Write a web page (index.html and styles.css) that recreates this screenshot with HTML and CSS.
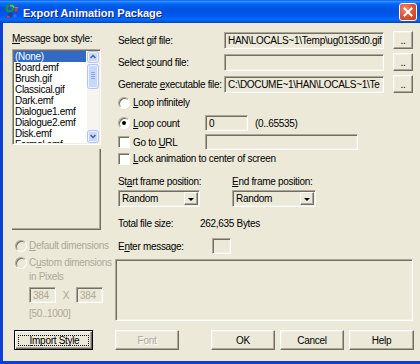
FILE: index.html
```html
<!DOCTYPE html>
<html lang="en">
<head>
    <meta charset="utf-8">
    <title>Export Animation Package</title>
    <link rel="stylesheet" href="styles.css">
</head>
<body>
<div class="window">
    <div class="titlebar">
        <svg class="app-icon" width="14" height="16" viewBox="0 0 14 16">
            <path d="M4 2 C1 3 1 7 3 8 C5 9 8 8 8 5 C8 3 6 2 5 3" fill="none" stroke="#1f8f3a" stroke-width="2.4"/>
            <path d="M5 3 C7 2 9 3 9 5" fill="none" stroke="#6fd35c" stroke-width="1.2"/>
            <circle cx="11" cy="7" r="1.6" fill="#e2322b"/>
            <rect x="10" y="4" width="3" height="1.4" fill="#f06a3a"/>
            <path d="M3 10 L7 9 L8 12 L6 15 L3 14 Z" fill="#1d3fa8"/>
            <path d="M8 12 L11 11 L12 14 L9 15 Z" fill="#3d68d8"/>
            <rect x="2" y="13" width="3" height="1.5" fill="#e2322b"/>
        </svg>
        <span class="title">Export Animation Package</span>
        <span class="close-btn">
            <svg width="10" height="10" viewBox="0 0 10 10">
                <path d="M1.5 1.5 L8.5 8.5 M8.5 1.5 L1.5 8.5" stroke="#fff" stroke-width="2" stroke-linecap="square"/>
            </svg>
        </span>
    </div>

    <div class="client">
        <div class="panes">
            <div class="left-pane">
                <div class="label"><u>M</u>essage box style:</div>
                <div class="listbox">
                    <ul class="items">
                        <li class="selected">(None)</li>
                        <li>Board.emf</li>
                        <li>Brush.gif</li>
                        <li>Classical.gif</li>
                        <li>Dark.emf</li>
                        <li>Dialogue1.emf</li>
                        <li>Dialogue2.emf</li>
                        <li>Disk.emf</li>
                        <li>Formal.emf</li>
                    </ul>
                    <svg class="vscroll" width="12" height="92" viewBox="0 0 12 92">
                        <rect x="0" y="0" width="12" height="92" fill="#f5f4ef"/>
                        <rect x="0.5" y="0.5" width="11" height="11" rx="2" fill="#c8d7fc" stroke="#b1c5f4"/>
                        <rect x="1.5" y="1.5" width="9" height="9" rx="1" fill="none" stroke="#eef3ff"/>
                        <path d="M3.5 7 L6 4.5 L8.5 7" fill="none" stroke="#4d6185" stroke-width="1.5"/>
                        <rect x="0.5" y="13.5" width="11" height="24" rx="2" fill="#c8d7fc" stroke="#b1c5f4"/>
                        <rect x="1.5" y="14.5" width="9" height="22" rx="1" fill="none" stroke="#eef3ff"/>
                        <path d="M4 21.5 H8 M4 23.5 H8 M4 25.5 H8 M4 27.5 H8" stroke="#8ba6e8"/>
                        <rect x="0.5" y="79.5" width="11" height="12" rx="2" fill="#c8d7fc" stroke="#b1c5f4"/>
                        <rect x="1.5" y="80.5" width="9" height="10" rx="1" fill="none" stroke="#eef3ff"/>
                        <path d="M3.5 84 L6 86.5 L8.5 84" fill="none" stroke="#4d6185" stroke-width="1.5"/>
                    </svg>
                </div>
                <div class="preview"></div>

                <div class="opt dim"><span class="radio"></span><span><u>D</u>efault dimensions</span></div>
                <div class="opt dim second"><span class="radio"></span><span>C<u>u</u>stom dimensions</span></div>
                <div class="sub dim">in Pixels</div>
                <div class="dims">
                    <span class="field small">384</span>
                    <span class="times dim">X</span>
                    <span class="field small">384</span>
                </div>
                <div class="sub dim range">[50..1000]</div>
            </div>

            <div class="right-pane">
                <div class="file-row">
                    <span class="file-label">Select <u>g</u>if file:</span>
                    <span class="field path">HAN\LOCALS~1\Temp\ug0135d0.gif</span>
                    <span class="btn browse">..</span>
                </div>
                <div class="file-row">
                    <span class="file-label">Select <u>s</u>ound file:</span>
                    <span class="field path"></span>
                    <span class="btn browse">..</span>
                </div>
                <div class="file-row">
                    <span class="file-label">Generate <u>e</u>xecutable file:</span>
                    <span class="field path">C:\DOCUME~1\HAN\LOCALS~1\Te</span>
                    <span class="btn browse">..</span>
                </div>

                <div class="opt loop-inf"><span class="radio"></span><span><u>L</u>oop infinitely</span></div>
                <div class="loop-count">
                    <span class="opt fixed"><span class="radio checked"></span><span><u>L</u>oop count</span></span>
                    <span class="field count">0</span>
                    <span class="hint">(0..65535)</span>
                </div>
                <div class="url-row">
                    <span class="opt fixed"><span class="check"></span><span>Go to <u>U</u>RL</span></span>
                    <span class="field url"></span>
                </div>
                <div class="opt lock"><span class="check"></span><span><u>L</u>ock animation to center of screen</span></div>

                <div class="frames">
                    <div class="frame-col start">
                        <div class="label">St<u>a</u>rt frame position:</div>
                        <div class="combo start-combo"><span class="combo-text">Random</span><span class="drop"></span></div>
                    </div>
                    <div class="frame-col">
                        <div class="label"><u>E</u>nd frame position:</div>
                        <div class="combo end-combo"><span class="combo-text">Random</span><span class="drop"></span></div>
                    </div>
                </div>

                <div class="total">
                    <span class="total-label">Total file size:</span>
                    <span>262,635 Bytes</span>
                </div>

                <div class="enter-row">
                    <span class="enter-label">E<u>n</u>ter message:</span>
                    <span class="field swatch"></span>
                </div>
                <div class="field message"></div>
            </div>
        </div>

        <div class="footer">
            <span class="btn default import"><span class="focus"><u>I</u>mport Style</span></span>
            <span class="btn font-btn dim">Font</span>
            <span class="btn ok">OK</span>
            <span class="btn cancel">Cancel</span>
            <span class="btn help">Help</span>
        </div>
    </div>
</div>
</body>
</html>
```

FILE: styles.css
```css
* { box-sizing: border-box }

body {
    margin: 0;
    background: #ECE9D8;
    font-family: "Liberation Sans", Arial, sans-serif;
    font-size: 10px;
    letter-spacing: -0.3px;
    color: #000;
}

u { text-underline-offset: 1px }

.window {
    width: 420px;
    height: 364px;
    display: flex;
    flex-direction: column;
    background: #0A40D6;
    overflow: hidden;
}

/* title bar */
.titlebar {
    height: 23px;
    flex: none;
    display: flex;
    align-items: flex-start;
    padding: 0 3px 0 5px;
    background: linear-gradient(to bottom, #0058EE 0%, #3A93FF 6%, #1D7FFF 10%, #036FFC 14%,
        #0262EE 22%, #0057E5 30%, #0054E3 45%, #0055EB 62%, #005BF5 72%, #026AFE 82%,
        #0062EF 90%, #0052D6 96%, #0040AB 100%);
}

.app-icon { margin: 3px 4px 0 0 }

.title {
    flex: 1;
    margin-top: 7px;
    line-height: 13px;
    color: #fff;
    font-size: 11px;
    font-weight: bold;
    letter-spacing: 0;
    text-shadow: 1px 1px #0A1E8C;
}

.close-btn {
    width: 18px;
    height: 18px;
    margin-top: 3px;
    display: flex;
    align-items: center;
    justify-content: center;
    border: 1px solid #fff;
    border-radius: 3px;
    background: radial-gradient(circle at 35% 30%, #F08A6A 0%, #E2583A 45%, #C43A1C 100%);
}

/* client area */
.client {
    flex: 1;
    margin: 0 0 3px 3px;
    background: #ECE9D8;
    display: flex;
    flex-direction: column;
}

.panes {
    height: 298px;
    display: flex;
}

.label, .opt, .sub { line-height: 13px; white-space: nowrap }

.dim { color: #ACA899 }

/* 3d edges */
.field {
    display: block;
    border: 1px solid;
    border-color: #ACA899 #FFFFFF #FFFFFF #ACA899;
    box-shadow: inset 1px 1px 0 #716F64, inset -1px -1px 0 #F1EFE2;
    line-height: 13px;
    padding: 1px 0 0 3px;
    white-space: nowrap;
    overflow: hidden;
}

.btn {
    display: flex;
    align-items: center;
    justify-content: center;
    border: 1px solid;
    border-color: #FFFFFF #716F64 #716F64 #FFFFFF;
    box-shadow: inset -1px -1px 0 #ACA899, inset 1px 1px 0 #F1EFE2;
    white-space: nowrap;
}

/* left pane */
.left-pane {
    width: 112px;
    padding-left: 9px;
    display: flex;
    flex-direction: column;
}

.left-pane > .label { margin-top: 9px }

.listbox {
    margin-top: 4px;
    width: 89px;
    height: 96px;
    display: flex;
    justify-content: space-between;
    background: #fff;
    border: 1px solid;
    border-color: #ACA899 #FFFFFF #FFFFFF #ACA899;
    box-shadow: inset 1px 1px 0 #716F64, inset -1px -1px 0 #F1EFE2;
    padding: 1px;
    overflow: hidden;
}

.items {
    list-style: none;
    margin: 0;
    padding: 0;
    width: 72px;
    overflow: hidden;
}

.items li {
    height: 11px;
    line-height: 11px;
    padding-left: 1px;
    white-space: nowrap;
}

.items .selected {
    background: #316AC5;
    color: #fff;
}

.vscroll { flex: none }

.preview {
    margin-top: 4px;
    width: 89px;
    height: 81px;
    border-right: 1px solid #716F64;
    border-bottom: 1px solid #716F64;
    box-shadow: inset -1px -1px 0 #ACA899;
}

.opt {
    display: flex;
    align-items: center;
    gap: 3px;
    height: 13px;
}

.left-pane .opt {
    margin-top: 9px;
    padding-left: 3px;
    gap: 2px;
}

.left-pane .opt.second { margin-top: 4px }

.radio {
    width: 12px;
    height: 12px;
    flex: none;
    border-radius: 50%;
    border: 1px solid;
    border-color: #ACA899 #FFFFFF #FFFFFF #ACA899;
    background: #fff;
    box-shadow: inset 1px 1px 0 #716F64;
    display: flex;
    align-items: center;
    justify-content: center;
}

.dim .radio { background: #ECE9D8 }

.radio.checked::after {
    content: "";
    width: 4px;
    height: 4px;
    border-radius: 50%;
    background: #000;
}

.check {
    width: 12px;
    height: 12px;
    flex: none;
    border: 1px solid;
    border-color: #ACA899 #FFFFFF #FFFFFF #ACA899;
    background: #fff;
    box-shadow: inset 1px 1px 0 #716F64;
}

.sub {
    margin-top: 1px;
    padding-left: 17px;
}

.dims {
    margin-top: 4px;
    padding-left: 17px;
    display: flex;
    align-items: center;
}

.field.small {
    width: 27px;
    height: 16px;
    color: #ACA899;
}

.times { width: 20px; text-align: center }

.sub.range { margin-top: 4px }

/* right pane */
.right-pane {
    width: 298px;
    display: flex;
    flex-direction: column;
}

.file-row {
    margin-top: 4px;
    height: 18px;
    display: flex;
    align-items: center;
}

.file-row:first-child { margin-top: 8px }

.file-label {
    width: 109px;
    padding-left: 3px;
    line-height: 13px;
    white-space: nowrap;
}

.field.path {
    width: 160px;
    height: 17px;
    margin-top: 1px;
}

.btn.browse {
    width: 20px;
    height: 18px;
    margin-left: 9px;
    align-items: flex-end;
    padding-bottom: 3px;
    line-height: 8px;
}

.right-pane > .opt { padding-left: 3px }

.loop-inf { margin-top: 3px }

.loop-count, .url-row {
    height: 16px;
    display: flex;
    align-items: center;
}

.loop-count { margin-top: 6px }

.url-row { margin-top: 3px }

.opt.fixed {
    width: 90px;
    padding-left: 3px;
}

.field.count { width: 43px; height: 16px }

.hint { margin-left: 7px }

.field.url { width: 153px; height: 16px }

.lock { margin-top: 2px }

.frames {
    margin-top: 10px;
    display: flex;
}

.frame-col { display: flex; flex-direction: column }

.frame-col.start {
    width: 117px;
    padding-left: 3px;
}

.combo {
    margin-top: 2px;
    height: 17px;
    display: flex;
    border: 1px solid;
    border-color: #ACA899 #FFFFFF #FFFFFF #ACA899;
    box-shadow: inset 1px 1px 0 #716F64, inset -1px -1px 0 #F1EFE2;
    padding: 1px;
}

.start-combo { width: 82px }
.end-combo { width: 84px }

.combo-text {
    flex: 1;
    padding-left: 2px;
    line-height: 13px;
}

.drop {
    width: 14px;
    display: flex;
    align-items: center;
    justify-content: center;
    border: 1px solid;
    border-color: #FFFFFF #716F64 #716F64 #FFFFFF;
    box-shadow: inset -1px -1px 0 #ACA899;
}

.drop::after {
    content: "";
    border-left: 3px solid transparent;
    border-right: 3px solid transparent;
    border-top: 3px solid #000;
    margin-top: 1px;
}

.total {
    margin-top: 10px;
    line-height: 13px;
    display: flex;
    white-space: nowrap;
}

.total-label { width: 85px; padding-left: 3px }

.enter-row {
    margin-top: 8px;
    height: 16px;
    display: flex;
    align-items: center;
}

.enter-label {
    width: 97px;
    padding-left: 3px;
    line-height: 13px;
}

.field.swatch { width: 19px; height: 16px }

.field.message {
    margin-top: 5px;
    width: 298px;
    height: 62px;
}

/* footer buttons */
.footer {
    margin-top: 9px;
    height: 20px;
    padding-left: 11px;
    display: flex;
}

.footer .btn { height: 20px; width: 64px }

.btn.import {
    width: 79px;
    border: 1px solid #000;
    box-shadow: inset 1px 1px 0 #FFFFFF, inset -1px -1px 0 #716F64, inset -2px -2px 0 #ACA899;
    padding: 4px 3px 3px 3px;
    align-items: stretch;
}

.focus {
    flex: 1;
    border: 1px dotted #000;
    display: flex;
    align-items: center;
    justify-content: center;
    padding-left: 2px;
}

.btn.font-btn {
    margin-left: 22px;
    text-shadow: 1px 1px #fff;
}

.btn.ok { margin-left: 32px }

.btn.cancel, .btn.help { margin-left: 5px }

.btn.help { width: 65px }
```
